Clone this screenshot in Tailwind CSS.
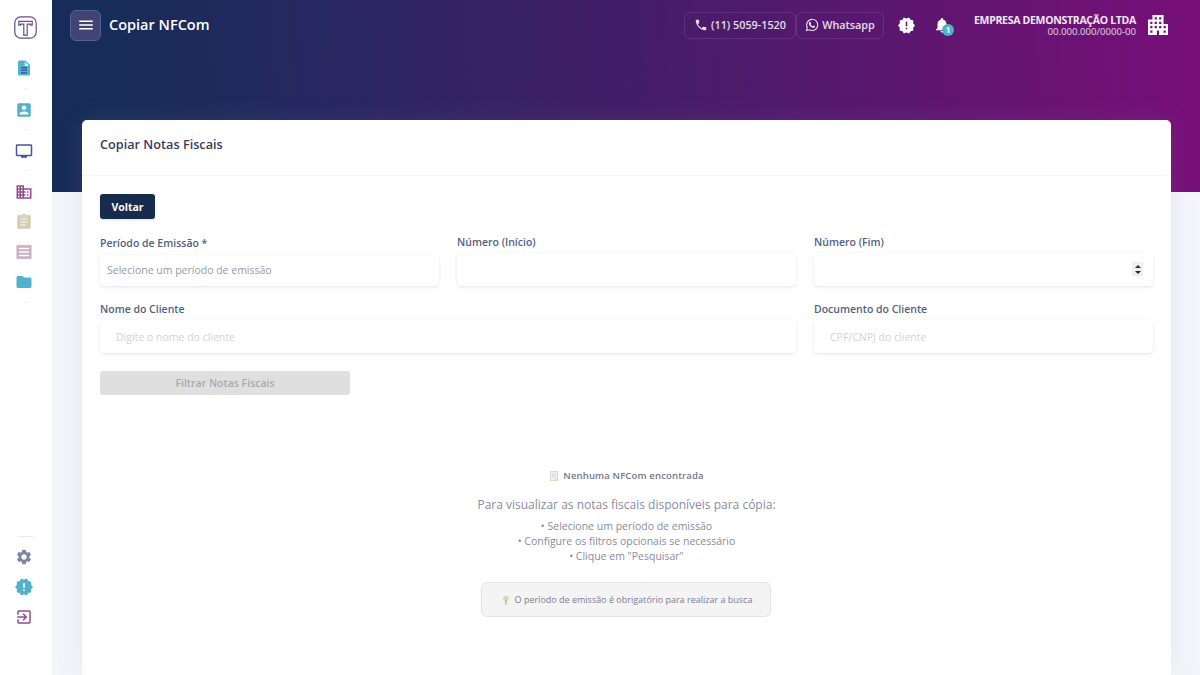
<!DOCTYPE html>
<html lang="pt-BR">
<head>
  <meta charset="UTF-8" />
  <meta name="viewport" content="width=device-width, initial-scale=1.0" />
  <title>Copiar NFCom</title>
  <script src="https://cdn.jsdelivr.net/npm/@tailwindcss/browser@4"></script>
</head>
<body class="flex h-[675px] overflow-hidden bg-[#f4f5fb] font-['Open_Sans',sans-serif] text-[#525f7f]">

  <!-- Menu lateral -->
  <aside class="flex h-full w-[52px] shrink-0 flex-col items-center bg-white pr-1 pt-4">
    <svg class="ml-[3px] h-[23px] w-[23px]" viewBox="0 0 23 23" fill="none">
      <defs>
        <linearGradient id="logo" x1="0" y1="1" x2="1" y2="0">
          <stop offset="0" stop-color="#3f5796" /><stop offset="1" stop-color="#7b4a8c" />
        </linearGradient>
      </defs>
      <rect x="0.8" y="0.8" width="21.4" height="21.4" rx="6" stroke="url(#logo)" stroke-width="1.2" />
      <path d="M4.8 5.4H18.2V9.2H16.4V8.2H13.2V19.2H9.8V8.2H6.6V9.2H4.8Z" stroke="url(#logo)" stroke-width="1.2" />
    </svg>

    <a href="#" class="mt-5 flex h-[18px] items-center">
      <svg class="h-[18px] w-[18px]" viewBox="0 0 24 24">
        <path fill="#52b1cd" d="M14 2H6c-1.1 0-2 .9-2 2v16c0 1.1.89 2 1.990 2H18c1.1 0 2-.9 2-2V8l-6-6z" />
        <path fill="#fff" d="M13 9V3.5L18.5 9z" />
        <path fill="#34508f" d="M8 10.500h8v1.700H8zM8 14h8v1.700H8zM8 17.500h8v1.700H8z" />
      </svg>
    </a>
    <hr class="ml-1 mt-[11px] w-1 border-[#f1f1f4]" />
    <a href="#" class="mt-[12px] flex h-[17px] items-center">
      <svg class="h-[18px] w-[18px]" viewBox="0 0 24 24" fill="#52b1cd">
        <path d="M19 3H5c-1.1 0-2 .9-2 2v14c0 1.1.9 2 2 2h14c1.1 0 2-.9 2-2V5c0-1.1-.9-2-2-2zm-7 3c1.66 0 3 1.34 3 3s-1.34 3-3 3-3-1.34-3-3 1.34-3 3-3zm6 12H6v-1c0-2 4-3.1 6-3.1s6 1.1 6 3.1v1z" />
      </svg>
    </a>
    <hr class="ml-1 mt-[11px] w-1 border-[#f1f1f4]" />
    <a href="#" class="mt-[12px] flex h-[17px] items-center">
      <svg class="h-[18px] w-[18px]" viewBox="0 0 24 24" fill="#3c5a9b">
        <path d="M21 3H3c-1.1 0-2 .9-2 2v12c0 1.1.9 2 2 2h5v2h8v-2h5c1.1 0 1.990-.9 1.990-2L23 5c0-1.1-.9-2-2-2zm0 14H3V5h18v12z" />
      </svg>
    </a>
    <hr class="ml-1 mt-[11px] w-1 border-[#f1f1f4]" />
    <a href="#" class="mt-[12px] flex h-[18px] items-center">
      <svg class="h-[18px] w-[18px]" viewBox="0 0 24 24" fill="#954c90">
        <path d="M12 7V3H2v18h20V7H12zM6 19H4v-2h2v2zm0-4H4v-2h2v2zm0-4H4V9h2v2zm0-4H4V5h2v2zm4 12H8v-2h2v2zm0-4H8v-2h2v2zm0-4H8V9h2v2zm0-4H8V5h2v2zm10 12h-8v-2h2v-2h-2v-2h2v-2h-2V9h8v10zm-2-8h-2v2h2v-2zm0 4h-2v2h2v-2z" />
      </svg>
    </a>
    <a href="#" class="mt-3 flex h-[18px] items-center">
      <svg class="h-[18px] w-[18px]" viewBox="0 0 24 24" fill="#d2cdb1">
        <path d="M19 3h-4.180C14.4 1.84 13.3 1 12 1c-1.3 0-2.4.84-2.820 2H5c-1.1 0-2 .9-2 2v14c0 1.1.9 2 2 2h14c1.1 0 2-.9 2-2V5c0-1.1-.9-2-2-2zm-7 0c.55 0 1 .45 1 1s-.45 1-1 1-1-.45-1-1 .45-1 1-1z" />
        <path fill="#efecde" d="M7 7h10v2H7zM7 11h10v2H7zM7 15h7v2H7z" />
      </svg>
    </a>
    <a href="#" class="mt-3 flex h-[18px] items-center">
      <svg class="h-[18px] w-[18px]" viewBox="0 0 24 24" fill="#c9afc3">
        <path d="M19.5 3.5L18 2l-1.5 1.5L15 2l-1.5 1.5L12 2l-1.5 1.5L9 2 7.5 3.5 6 2 4.500 3.5 2 2v20l2.500-1.500L6 22l1.500-1.500L9 22l1.500-1.500L12 22l1.500-1.500L15 22l1.500-1.500L18 22l1.500-1.500L22 22V2zM19 17.800H5v-2h14zm0-4.800H5v-2h14zm0-4.800H5v-2h14z" />
      </svg>
    </a>
    <a href="#" class="mt-3 flex h-[18px] items-center">
      <svg class="h-[18px] w-[18px]" viewBox="0 0 24 24" fill="#52b1cd">
        <path d="M10 4H4c-1.1 0-1.990.9-1.990 2L2 18c0 1.1.9 2 2 2h16c1.1 0 2-.9 2-2V8c0-1.1-.9-2-2-2h-8l-2-2z" />
      </svg>
    </a>
    <hr class="ml-1 mt-[11px] w-1 border-[#f1f1f4]" />

    <div class="mb-[49px] mt-auto flex flex-col items-center gap-3">
      <hr class="-mb-1 ml-1 w-4 border-[#ececf1]" />
      <a href="#" class="mt-[3px]">
        <svg class="h-[18px] w-[18px]" viewBox="0 0 24 24" fill="#7d87a3">
          <path d="M19.140 12.940c.04-.3.060-.61.060-.94 0-.32-.02-.64-.07-.94l2.030-1.580c.18-.14.23-.41.120-.61l-1.920-3.320c-.12-.22-.37-.29-.59-.22l-2.390.96c-.5-.38-1.030-.7-1.620-.94l-.36-2.540c-.04-.24-.24-.41-.48-.41h-3.840c-.24 0-.43.17-.47.41l-.36 2.540c-.59.24-1.130.57-1.620.94l-2.390-.96c-.22-.08-.47 0-.59.22L2.740 8.870c-.12.21-.08.47.12.61l2.030 1.580c-.05.3-.09.63-.09.94s.02.64.07.94l-2.030 1.580c-.18.14-.23.41-.12.61l1.920 3.320c.12.22.37.29.59.22l2.390-.96c.5.38 1.030.7 1.620.94l.36 2.540c.05.24.24.41.48.41h3.840c.24 0 .44-.17.47-.41l.36-2.540c.59-.24 1.130-.56 1.620-.94l2.390.96c.22.08.47 0 .59-.22l1.920-3.320c.12-.22.07-.47-.12-.61l-2.010-1.580zM12 15.600c-1.980 0-3.600-1.620-3.600-3.600s1.620-3.600 3.600-3.600 3.600 1.620 3.600 3.600-1.620 3.600-3.600 3.600z" />
        </svg>
      </a>
      <a href="#">
        <svg class="h-[18px] w-[18px]" viewBox="1 1 22 22" fill="#52b1cd">
          <path d="M23 12l-2.440-2.780.34-3.680-3.610-.82-1.890-3.180L12 3 8.600 1.540 6.710 4.720l-3.610.81.34 3.680L1 12l2.440 2.780-.34 3.690 3.610.82 1.890 3.180L12 21l3.400 1.460 1.890-3.180 3.610-.82-.34-3.680L23 12zm-10 5h-2v-2h2v2zm0-4h-2V7h2v6z" />
        </svg>
      </a>
      <a href="#">
        <svg class="h-[18px] w-[18px]" viewBox="0 0 24 24" fill="#954c90">
          <path d="M10.090 15.590L11.500 17l5-5-5-5-1.410 1.410L12.670 11H3v2h9.670l-2.580 2.590zM19 3H5c-1.110 0-2 .9-2 2v4h2V5h14v14H5v-4H3v4c0 1.100.89 2 2 2h14c1.100 0 2-.9 2-2V5c0-1.100-.9-2-2-2z" />
        </svg>
      </a>
    </div>
  </aside>

  <div class="flex min-w-0 flex-1 flex-col">

    <!-- Topo -->
    <header class="h-[192px] shrink-0 bg-[linear-gradient(87deg,#172d58_0%,#182c59_7%,#252860_22%,#451d68_52%,#780f79_100%)] pl-[18px] pr-8">
      <div class="flex h-[50px] items-center text-white">
        <button class="flex h-[31px] w-[31px] items-center justify-center rounded-md border border-[#50609a] bg-[#414473]">
          <svg class="h-[18px] w-[18px]" viewBox="0 0 24 24" fill="#fff"><path d="M3 18h18v-2H3v2zm0-5h18v-2H3v2zm0-7v2h18V6H3z" /></svg>
        </button>
        <h1 class="ml-2 text-[14.500px] font-semibold">Copiar NFCom</h1>

        <div class="ml-auto flex text-[10.800px] font-semibold text-white/85">
          <a href="#" class="flex h-[27px] w-[112px] items-center justify-center gap-[3px] whitespace-nowrap rounded-md border border-white/10">
            <svg class="h-[14px] w-[14px]" viewBox="0 0 24 24" fill="currentColor"><path d="M6.620 10.790c1.440 2.830 3.760 5.140 6.590 6.590l2.200-2.200c.27-.27.67-.36 1.020-.24 1.120.37 2.330.57 3.570.57.55 0 1 .45 1 1V20c0 .55-.45 1-1 1-9.390 0-17-7.610-17-17 0-.55.45-1 1-1h3.500c.55 0 1 .45 1 1 0 1.250.2 2.450.57 3.570.11.35.03.74-.25 1.020l-2.200 2.200z" /></svg>
            (11) 5059-1520
          </a>
          <a href="#" class="flex h-[27px] w-[88px] items-center justify-center gap-[3px] rounded-md border border-white/10">
            <svg class="h-[14px] w-[14px]" viewBox="0 0 24 24" fill="none" stroke="currentColor" stroke-width="2">
              <path d="M2.500 21.500l1.400-5A9.600 9.600 0 1 1 7.600 20.200z" />
              <path fill="currentColor" stroke="none" d="M8.500 6.500c.5-.1.900 0 1.100.5l.8 1.900c.1.400-.1.900-.8 1.600.9 1.700 2.100 2.800 3.800 3.500.8-.9 1.100-1.300 1.600-1.100l2 1c.4.200.4.600.2 1.200-.5 1.400-2 2.100-3.400 1.900-3.800-.8-6.600-3.700-7.300-6.600-.3-1.700.8-3.500 2-3.900z" />
            </svg>
            Whatsapp
          </a>
        </div>

        <svg class="ml-[14px] h-[17px] w-[17px]" viewBox="1 1 22 22" fill="#fff">
          <path d="M23 12l-2.440-2.780.34-3.680-3.610-.82-1.890-3.180L12 3 8.600 1.540 6.710 4.720l-3.610.81.34 3.680L1 12l2.440 2.780-.34 3.690 3.610.82 1.890 3.180L12 21l3.400 1.460 1.890-3.180 3.610-.82-.34-3.680L23 12zm-10 5h-2v-2h2v2zm0-4h-2V7h2v6z" />
        </svg>
        <div class="relative ml-[18px]">
          <svg class="h-[18px] w-[18px]" viewBox="0 0 24 24" fill="#fff"><path d="M12 22c1.100 0 2-.9 2-2h-4c0 1.100.89 2 2 2zm6-6v-5c0-3.070-1.640-5.640-4.500-6.320V4c0-.83-.67-1.500-1.500-1.500s-1.500.67-1.500 1.500v.68C7.630 5.360 6 7.920 6 11v5l-2 2v1h16v-1l-2-2z" /></svg>
          <span class="absolute left-[9px] top-[8px] flex h-3 w-3 items-center justify-center rounded-full bg-[#4fb1d0] text-[8px] font-bold leading-none">1</span>
        </div>

        <div class="ml-[23px] whitespace-nowrap text-right">
          <p class="text-[10.500px] font-bold leading-[12px] tracking-[-0.3px] text-white/90">EMPRESA DEMONSTRAÇÃO LTDA</p>
          <p class="text-[9.600px] leading-[11px] text-white/80">00.000.000/0000-00</p>
        </div>
        <svg class="ml-3 h-5 w-5" viewBox="3 3 18 18" fill="#fff" fill-rule="evenodd">
          <path d="M17 11V3H7v4H3v14h8v-4h2v4h8V11h-4zM7 19H5v-2h2v2zm0-4H5v-2h2v2zm0-4H5V9h2v2zm4 4H9v-2h2v2zm0-4H9V9h2v2zm0-4H9V5h2v2zm4 8h-2v-2h2v2zm0-4h-2V9h2v2zm0-4h-2V5h2v2zm4 12h-2v-2h2v2zm0-4h-2v-2h2v2z" />
        </svg>
      </div>
    </header>

    <!-- Card principal -->
    <main class="-mt-[72px] ml-[30px] mr-[29px] flex-1 rounded-t-[5px] bg-white shadow-[0_0_26px_rgba(136,152,170,0.13)]">
      <div class="flex h-14 items-center border-b border-[#f5f5f8] px-[18px] pb-[5px]">
        <h2 class="text-[12.700px] font-semibold text-[#3b3965]">Copiar Notas Fiscais</h2>
      </div>

      <div class="px-[18px] pt-[18px]">
        <button class="flex h-[25px] w-[55px] items-center justify-center rounded-[3px] bg-[#172b4d] pt-[2px] text-[10.500px] font-bold text-white shadow-sm">Voltar</button>

        <form class="mt-[15px] grid grid-cols-3 gap-x-[18px] text-[10.500px]">
          <div class="h-[67px]">
            <label class="block h-[21px] font-semibold leading-[18px]">Período de Emissão *</label>
            <input type="text" placeholder="Selecione um período de emissão" class="block h-[31px] w-full rounded-[3px] px-[7px] pb-[2px] shadow-[0_1px_3px_rgba(50,50,93,0.14)] placeholder:text-[#9699a5]" />
          </div>
          <div>
            <label class="block h-[19px] font-semibold leading-[16px]">Número (Início)</label>
            <input type="text" class="block h-[33px] w-full rounded-[4px] px-4 shadow-[0_1px_3px_rgba(50,50,93,0.14)]" />
          </div>
          <div>
            <label class="block h-[19px] font-semibold leading-[16px]">Número (Fim)</label>
            <div class="flex h-[33px] items-center justify-end rounded-[4px] pb-px pr-[10px] shadow-[0_1px_3px_rgba(50,50,93,0.14)]">
              <span class="flex h-[14px] w-[11px] items-center justify-center bg-[#efefef]">
                <svg class="h-[9px] w-[6px]" viewBox="0 0 6 9" fill="#25215c"><path d="M0 3L3 0l3 3zM0 6l3 3 3-3z" /></svg>
              </span>
            </div>
          </div>
          <div class="col-span-2">
            <label class="block h-[19px] font-semibold leading-[16px]">Nome do Cliente</label>
            <input type="text" placeholder="Digite o nome do cliente" class="block h-[33px] w-full rounded-[4px] px-4 shadow-[0_1px_3px_rgba(50,50,93,0.14)] placeholder:text-[#d0d3da]" />
          </div>
          <div>
            <label class="block h-[19px] font-semibold leading-[16px]">Documento do Cliente</label>
            <input type="text" placeholder="CPF/CNPJ do cliente" class="block h-[33px] w-full rounded-[4px] px-4 shadow-[0_1px_3px_rgba(50,50,93,0.14)] placeholder:text-[#d0d3da]" />
          </div>
        </form>

        <button disabled class="mt-[18px] flex h-6 w-[250px] items-center justify-center rounded-[3px] bg-[#dfdfdf] pt-[2px] text-[10.500px] font-semibold text-[#a9a9b4]">Filtrar Notas Fiscais</button>

        <!-- Lista vazia -->
        <div class="mt-[73px] flex flex-col items-center text-center text-[#8a8b9f]">
          <h3 class="flex h-4 items-center gap-1 text-[9.500px] font-semibold tracking-[0.15px] text-[#74758f]">
            <svg class="h-[10px] w-[10px]" viewBox="0 0 10 10">
              <path fill="#dedac0" d="M1 0h8v10H1z" /><path fill="#f2f2f5" d="M2 1h6v6L6 9H2z" />
              <path stroke="#c7c9d4" stroke-width=".6" d="M3 3h4M3 4.500h4M3 6h3" />
            </svg>
            Nenhuma NFCom encontrada
          </h3>
          <p class="mt-3 text-[12px] leading-[18px]">Para visualizar as notas fiscais disponíveis para cópia:</p>
          <ul class="mt-[5px] text-[10.500px] leading-[15px]">
            <li>• Selecione um período de emissão</li>
            <li>• Configure os filtros opcionais se necessário</li>
            <li>• Clique em "Pesquisar"</li>
          </ul>
          <div class="mr-px mt-[18px] flex h-[35px] w-[290px] items-center justify-center gap-1 rounded-md border border-[#e3e3e7] bg-[#f4f4f4] pl-px text-[9px] text-[#7c7c93]">
            <svg class="h-[10px] w-[10px]" viewBox="0 0 10 10">
              <circle cx="5" cy="3.500" r="2.800" fill="#dcd6b0" /><path fill="#c7c39f" d="M4 5.500h2V9.500H4z" />
            </svg>
            O período de emissão é obrigatório para realizar a busca
          </div>
        </div>
      </div>
    </main>
  </div>

</body>
</html>
